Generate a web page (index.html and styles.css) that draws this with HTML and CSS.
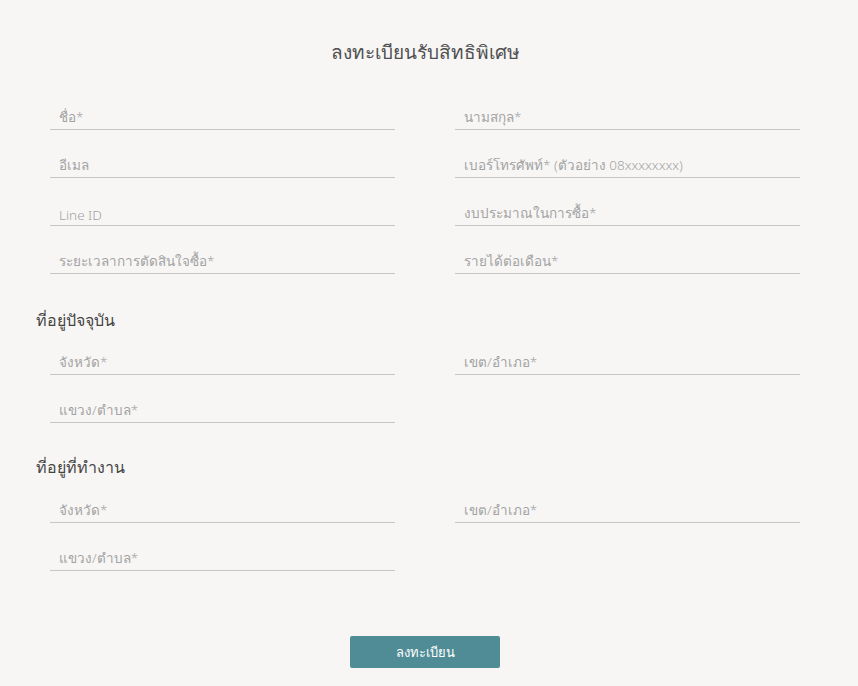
FILE: index.html
```html
<!DOCTYPE html>
<html lang="th">
<head>
<meta charset="utf-8">
<link rel="stylesheet" href="styles.css">
</head>
<body>
<div class="page">
  <h1 class="title">ลงทะเบียนรับสิทธิพิเศษ</h1>
  <form class="form">
    <div class="grid">
      <div class="field">ชื่อ*</div>
      <div class="field">นามสกุล*</div>
      <div class="field">อีเมล</div>
      <div class="field">เบอร์โทรศัพท์* (ตัวอย่าง 08xxxxxxxx)</div>
      <div class="field">Line ID</div>
      <div class="field">งบประมาณในการซื้อ*</div>
      <div class="field">ระยะเวลาการตัดสินใจซื้อ*</div>
      <div class="field">รายได้ต่อเดือน*</div>
    </div>
    <h2 class="section">ที่อยู่ปัจจุบัน</h2>
    <div class="grid">
      <div class="field">จังหวัด*</div>
      <div class="field">เขต/อำเภอ*</div>
      <div class="field">แขวง/ตำบล*</div>
    </div>
    <h2 class="section section-work">ที่อยู่ที่ทำงาน</h2>
    <div class="grid">
      <div class="field">จังหวัด*</div>
      <div class="field">เขต/อำเภอ*</div>
      <div class="field">แขวง/ตำบล*</div>
    </div>
    <div class="actions">
      <button type="button" class="btn">ลงทะเบียน</button>
    </div>
  </form>
</div>
</body>
</html>
```
FILE: styles.css
```css
html, body {
  margin: 0;
  padding: 0;
  background: #f7f6f5;
}
body {
  font-family: "Noto Sans", "DejaVu Sans", sans-serif;
  color: #555;
}
.page {
  width: 750px;
  margin: 0 auto 0 50px;
}
.title {
  margin: 0;
  padding-top: 38px;
  height: 28px;
  line-height: 28px;
  font-size: 19px;
  font-weight: 400;
  text-align: center;
  color: #505050;
}
.form {
  margin-top: 34px;
}
.grid {
  display: grid;
  grid-template-columns: 345px 345px;
  column-gap: 60px;
  row-gap: 18px;
}
.field {
  border-bottom: 1px solid #c6c6c6;
  padding: 0 9px 1px;
  box-sizing: border-box;
  height: 30px;
  display: flex;
  align-items: flex-end;
  font-size: 13.5px;
  font-weight: 300;
  color: #a3a3a3;
  white-space: nowrap;
}
.section {
  margin: 34px 0 13px -14px;
  height: 24px;
  line-height: 24px;
  font-size: 16px;
  font-weight: 400;
  color: #444;
}
.section-work {
  margin-top: 32px;
  margin-bottom: 14px;
}
.actions {
  display: flex;
  justify-content: center;
  margin-top: 65px;
}
.btn {
  width: 150px;
  height: 32px;
  border: 0;
  border-radius: 2px;
  background: #508c96;
  color: #fff;
  font-family: inherit;
  font-size: 13px;
  padding: 0;
}
```
